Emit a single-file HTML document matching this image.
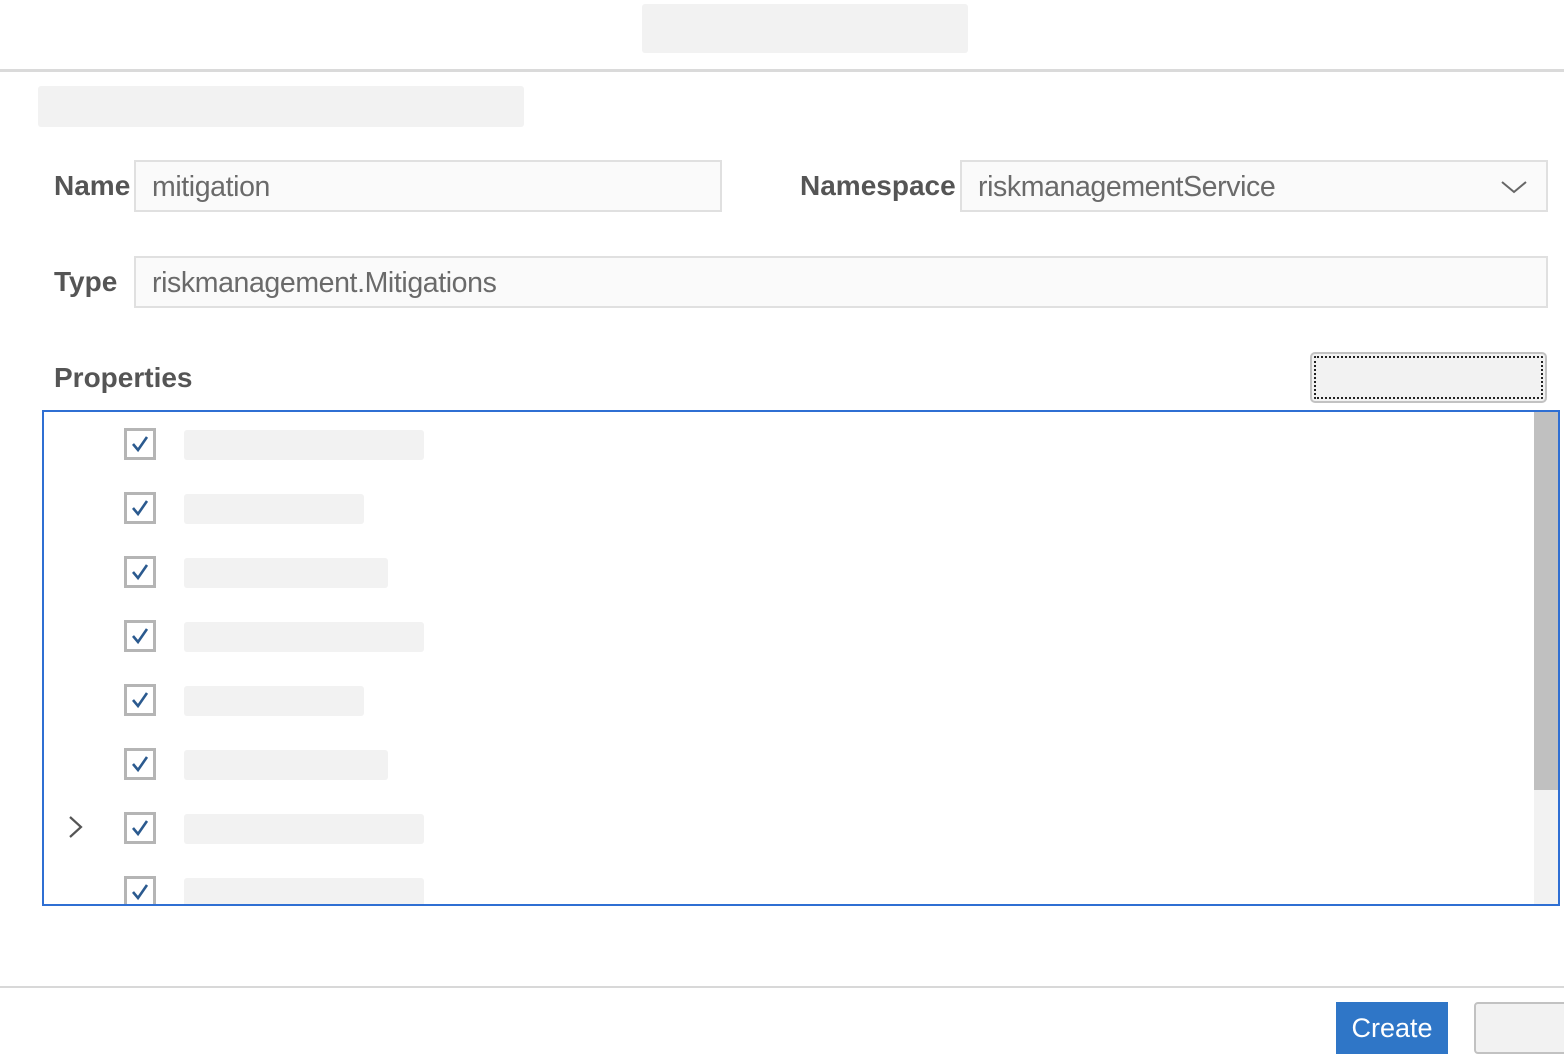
<!DOCTYPE html>
<html><head><style>
*{box-sizing:border-box;margin:0;padding:0}
body{width:1564px;height:1064px;background:#fff;position:relative;overflow:hidden;font-family:"Liberation Sans",Arial,sans-serif;color:#555}
.a{position:absolute}
.ph{background:#f2f2f2;border-radius:3px}
.lbl{font-weight:bold;font-size:28px;color:#555;letter-spacing:0}
.inp{border:2px solid #e0e0e0;background:#fafafa;font-size:28.5px;color:#6a6a6a;padding-left:16px;line-height:50px;letter-spacing:-0.4px}
.cb{width:32px;height:32px;border:3px solid #b5b5b5;background:#fff}
</style></head><body>
<div class="a ph" style="left:642px;top:4px;width:326px;height:49px"></div>
<div class="a" style="left:0;top:69px;width:1564px;height:3px;background:#dadada"></div>
<div class="a ph" style="left:38px;top:86px;width:486px;height:41px"></div>

<div class="a lbl" style="left:54px;top:170px">Name</div>
<div class="a inp" style="left:134px;top:160px;width:588px;height:52px">mitigation</div>
<div class="a lbl" style="left:800px;top:170px">Namespace</div>
<div class="a inp" style="left:960px;top:160px;width:588px;height:52px">riskmanagementService</div>
<svg class="a" style="left:1500px;top:178px" width="28" height="18"><path d="M2 4 L14 14 L26 4" fill="none" stroke="#666" stroke-width="2"/></svg>

<div class="a lbl" style="left:54px;top:266px">Type</div>
<div class="a inp" style="left:134px;top:256px;width:1414px;height:52px">riskmanagement.Mitigations</div>

<div class="a lbl" style="left:54px;top:362px">Properties</div>
<div class="a" style="left:1310px;top:352px;width:237px;height:51px;border:2px solid #c2c2c2;border-radius:5px;background:#f2f2f2;outline:2px dotted #222;outline-offset:-6px"></div>

<div class="a" style="left:42px;top:410px;width:1518px;height:496px;border:2px solid #2f6fd3;overflow:hidden">
  <div class="a" style="right:0;top:0;width:24px;height:492px;background:#f2f2f2"></div>
  <div class="a" style="right:0;top:0;width:24px;height:378px;background:#c0c0c0"></div>
</div>
<svg class="a" style="left:66px;top:814px" width="20" height="26"><path d="M4 3 L15 13 L4 23" fill="none" stroke="#555" stroke-width="2.2"/></svg>
<div id="rows"></div>
<script>
var w=[240,180,204,240,180,204,240,240],h='';
for(var i=0;i<8;i++){var y=428+i*64;
h+='<div class="a cb" style="left:124px;top:'+y+'px"><svg width="26" height="26" style="position:absolute;left:0;top:0"><path d="M6 13 L11 19 L20 6" fill="none" stroke="#2b5a8f" stroke-width="2.6"/></svg></div>';
h+='<div class="a ph" style="left:184px;top:'+(y+2)+'px;width:'+w[i]+'px;height:30px"></div>';}
document.getElementById('rows').innerHTML=h;
</script>
<div class="a" style="left:0;top:904px;width:1564px;height:80px;background:#fff"></div>
<div class="a" style="left:42px;top:904px;width:1518px;height:2px;background:#2f6fd3"></div>

<div class="a" style="left:0;top:986px;width:1564px;height:2px;background:#d8d8d8"></div>
<div class="a" style="left:1336px;top:1002px;width:112px;height:52px;background:#2f76c7;color:#fff;font-size:27px;text-align:center;line-height:52px">Create</div>
<div class="a" style="left:1474px;top:1002px;width:100px;height:52px;background:#f2f2f2;border:2px solid #c2c2c2;border-radius:4px"></div>
</body></html>
